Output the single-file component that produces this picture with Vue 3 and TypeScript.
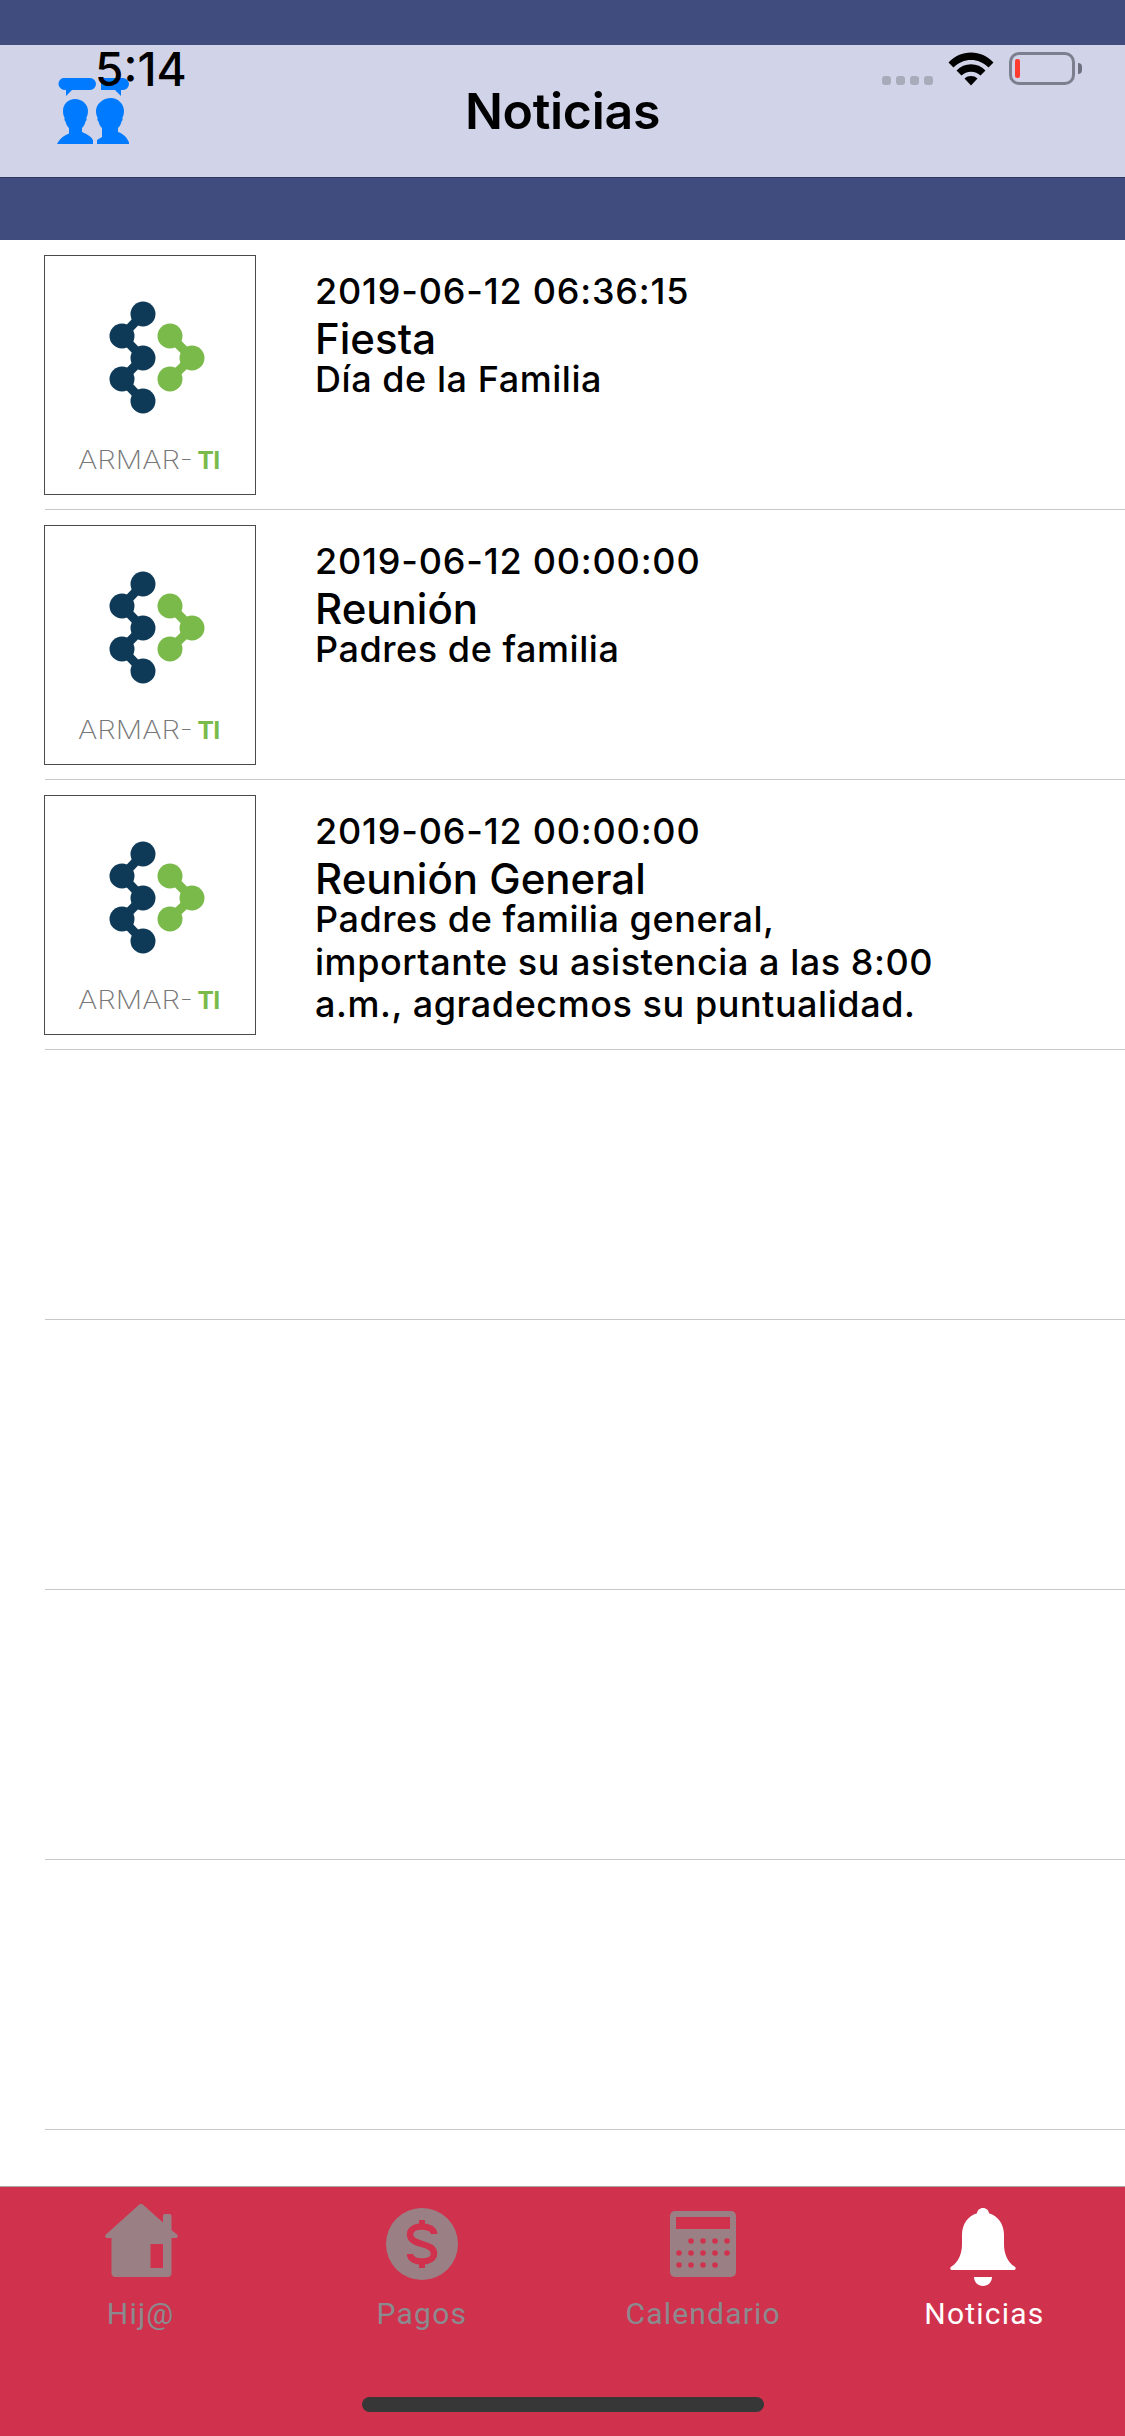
<script setup lang="ts">
interface NewsItem {
	date: string;
	title: string;
	body: string;
}

const news: NewsItem[] = [
	{ date: '2019-06-12 06:36:15', title: 'Fiesta', body: 'Día de la Familia' },
	{ date: '2019-06-12 00:00:00', title: 'Reunión', body: 'Padres de familia' },
	{
		date: '2019-06-12 00:00:00',
		title: 'Reunión General',
		body: 'Padres de familia general, importante su asistencia a las 8:00 a.m., agradecmos su puntualidad.',
	},
];

const emptyRows = 4;

const darkDots = [
	[99, 59],
	[78, 81],
	[99, 103],
	[78, 124],
	[99, 146],
];
const greenDots = [
	[126, 81],
	[148, 103],
	[126, 124],
];

const calendarDots = [
	[21, 30], [33, 30], [45, 30], [57, 30],
	[9, 42], [21, 42], [33, 42], [45, 42], [57, 42],
	[9, 54], [21, 54], [33, 54], [45, 54],
];
</script>

<template>
	<div class="screen">
		<div class="status">
			<span class="time">5:14</span>
			<div class="status-right">
				<div class="signal"><i></i><i></i><i></i><i></i></div>
				<svg class="wifi" width="46" height="34" viewBox="0 0 46 34">
					<path d="M0.5 10.5C6.5 4 14.5 0.5 23 0.5s16.500 3.500 22.500 10l-5 5C35.500 10.500 29.500 8 23 8S10.500 10.500 5.500 15.500z" fill="#000" />
					<path d="M8.500 18.500C12.500 14.500 17.500 12.300 23 12.300s10.500 2.200 14.500 6.200l-5 5C30 21 26.700 19.700 23 19.700s-7 1.300-9.500 3.800z" fill="#000" />
					<path d="M16.500 26.500C18.300 24.800 20.500 24 23 24s4.700 0.800 6.500 2.500L23 33.500z" fill="#000" />
				</svg>
				<div class="battery"><span class="battery-level"></span></div>
			</div>
		</div>

		<header class="header">
			<nav class="navbar">
				<svg class="people" width="72" height="66" viewBox="0 0 72 66">
					<path d="M6 0h27a6 6 0 0 1 0 12H15l-6 6v-6.300A6 6 0 0 1 6 0z" fill="#007aff" />
					<path d="M44 0h22a6 6 0 0 1 0 12h-2v6l-6-6H44z" fill="#007aff" />
					<path d="M18 21c7 0 13 5 13 12 0 3-.7 5-1.700 7 .6 1 .3 2.500-.8 3.500-.6 3-1.800 5-3.500 6.500v4c3 1.500 8 3 11 8v4H0c3-6 8-9 12-10.500v-5.500c-1.700-1.500-2.900-3.500-3.500-6.500-1.100-1-1.400-2.500-.8-3.500-1-2-1.700-4-1.700-7 0-7 5-12 12-12z" fill="#007aff" />
					<path d="M54 20c7 0 13 6 13 13 0 3-.7 5-1.700 7 .6 1 .3 2.500-.8 3.500-.6 3-1.800 5-3.500 6.500v4c4 1.500 8 3.500 11 10.500v1.500H40v-4l5-3v-9c-1.700-1.500-2.900-3.500-3.500-6.500-1.100-1-1.400-2.500-.8-3.500-1-2-1.700-4-1.700-7 0-7 7-13 15-13z" fill="#007aff" />
				</svg>
				<h1 class="title">Noticias</h1>
			</nav>
			<div class="subbar"></div>
		</header>

		<main class="list">
			<article v-for="(item, i) in news" :key="i" class="row">
				<div class="thumb">
					<svg width="210" height="238" viewBox="1 1 210 238">
						<path d="M99 59L78 81L99 103L78 124L99 146" fill="none" stroke="#0e3a58" stroke-width="9" />
						<path d="M126 81L148 103L126 124" fill="none" stroke="#7aba4a" stroke-width="9" />
						<circle v-for="(d, n) in darkDots" :key="n" :cx="d[0]" :cy="d[1]" r="12.500" fill="#0e3a58" />
						<circle v-for="(d, n) in greenDots" :key="n" :cx="d[0]" :cy="d[1]" r="12.500" fill="#7aba4a" />
						<text x="34" y="214" class="logo-word" textLength="115" lengthAdjust="spacingAndGlyphs">ARMAR-</text>
						<text x="154" y="214" class="logo-ti">TI</text>
					</svg>
				</div>
				<div class="copy">
					<div class="date">{{ item.date }}</div>
					<div class="name">{{ item.title }}</div>
					<p class="body">{{ item.body }}</p>
				</div>
			</article>
			<div v-for="n in emptyRows" :key="'empty' + n" class="row"></div>
		</main>

		<footer class="tabbar">
			<div class="tab">
				<svg width="90" height="90" viewBox="0 0 90 90">
					<path d="M45 4c1 0 1.500.3 2 .8L67 22.500V16c0-1.200.8-2 2-2h4.500c1.200 0 2 .8 2 2v14L81 34.500c1.500 1.500.5 3.500-1 3.500h-4.500v35c0 2.500-1.500 4-4 4h-52c-2.500 0-4-1.500-4-4V38H11c-1.500 0-2.500-2-1-3.500L43 4.800c.5-.5 1-.8 2-.8z M54.500 44v24H67V44z" fill="#9a8084" fill-rule="evenodd" />
				</svg>
				<span class="tab-label">Hij@</span>
			</div>
			<div class="tab">
				<svg width="90" height="90" viewBox="0 0 90 90">
					<circle cx="45" cy="44" r="36" fill="#9a8084" />
					<path d="M57 34C57 29.500 52 26.500 45 26.500C38 26.500 33 29.500 33 34.500C33 40 38 42 45 44C52 46 57 48 57 53.500C57 58.500 52 61.500 45 61.500C38 61.500 33 58.500 33 54" fill="none" stroke="#d0324e" stroke-width="6.500" />
					<rect x="42" y="20" width="6" height="8" fill="#d0324e" />
					<rect x="42" y="60" width="6" height="8" fill="#d0324e" />
				</svg>
				<span class="tab-label">Pagos</span>
			</div>
			<div class="tab">
				<svg width="90" height="90" viewBox="-12 -11 90 90">
					<rect width="66" height="66" rx="5" fill="#9a8084" />
					<rect x="6" y="6" width="54" height="12" fill="#d0324e" />
					<circle v-for="(d, n) in calendarDots" :key="n" :cx="d[0]" :cy="d[1]" r="2.800" fill="#d0324e" />
				</svg>
				<span class="tab-label">Calendario</span>
			</div>
			<div class="tab is-active">
				<svg width="90" height="90" viewBox="0 0 90 90">
					<path d="M44 8c3.300 0 5.800 2.300 6 5.200C59 16 65 24 65 35v9c0 10 3.500 18 10.500 22.500 2 1.300 1.500 3.500-1 3.500h-61c-2.500 0-3-2.200-1-3.500C19.500 62 23 54 23 44v-9C23 24 29 16 38 13.200 38.200 10.300 40.700 8 44 8z" fill="#fff" />
					<path d="M35 77h18c0 5-4 9-9 9s-9-4-9-9z" fill="#fff" />
				</svg>
				<span class="tab-label">Noticias</span>
			</div>
			<div class="home-bar"></div>
		</footer>
	</div>
</template>

<style>
html,
body {
	margin: 0;
	background: #fff;
}
</style>

<style scoped>
.screen {
	position: relative;
	width: 1125px;
	height: 2436px;
	display: flex;
	flex-direction: column;
	overflow: hidden;
	background: #fff;
	color: #000;
	font-family: Inter, "Liberation Sans", sans-serif;
}

/* status bar sits on top of the header */
.status {
	position: absolute;
	top: 0;
	left: 0;
	right: 0;
	height: 100px;
	z-index: 2;
	pointer-events: none;
}

.time {
	position: absolute;
	left: 95px;
	top: 44px;
	font-size: 46px;
	line-height: 50px;
	font-weight: 500;
}

.status-right {
	position: absolute;
	top: 52px;
	left: 882px;
	display: flex;
	align-items: flex-start;
}

.signal {
	display: flex;
	gap: 5px;
	margin-top: 24px;
	margin-right: 15px;
}

.signal i {
	width: 9px;
	height: 9px;
	border-radius: 3px;
	background: #a8abba;
}

.wifi {
	margin-right: 15px;
}

.battery {
	position: relative;
	box-sizing: border-box;
	width: 66px;
	height: 33px;
	border: 3px solid #7d7f8e;
	border-radius: 10px;
}

.battery::after {
	content: '';
	position: absolute;
	right: -10px;
	top: 8px;
	width: 4px;
	height: 11px;
	border-radius: 0 6px 6px 0;
	background: #6f7180;
}

.battery-level {
	position: absolute;
	left: 3px;
	top: 4px;
	width: 5px;
	height: 19px;
	border-radius: 2px;
	background: #ff3b30;
}

.header {
	flex: none;
	padding-top: 45px;
	background: #404c7e;
}

.navbar {
	position: relative;
	box-sizing: border-box;
	height: 133px;
	display: flex;
	align-items: center;
	justify-content: center;
	background: #d1d4e8;
	border-bottom: 1px solid #2f3860;
}

.people {
	position: absolute;
	left: 57px;
	top: 33px;
}

.title {
	margin: 0;
	font-size: 50px;
	line-height: 60px;
	font-weight: 600;
	letter-spacing: -0.3px;
}

.subbar {
	height: 62px;
}

.list {
	flex: 1;
	padding-left: 45px;
}

.row {
	box-sizing: border-box;
	height: 270px;
	padding-top: 15px;
	display: flex;
	border-bottom: 1px solid #c8c8c8;
}

.thumb {
	box-sizing: border-box;
	flex: none;
	width: 212px;
	height: 240px;
	margin-left: -1px;
	border: 1px solid #4a4a4a;
}

.thumb svg {
	display: block;
}

.logo-word {
	font-family: Inter, "Liberation Sans", sans-serif;
	font-size: 25px;
	font-weight: 200;
	fill: #777;
}

.logo-ti {
	font-family: "Liberation Sans", sans-serif;
	font-size: 25px;
	font-weight: 700;
	fill: #7aba4a;
}

.copy {
	width: 630px;
	margin-left: 59px;
	padding-top: 15px;
}

.date {
	font-size: 36px;
	line-height: 42px;
	font-weight: 500;
	letter-spacing: 0.8px;
}

.name {
	padding-top: 8px;
	font-size: 42px;
	line-height: 38px;
	font-weight: 500;
}

.body {
	margin: 0;
	font-size: 36px;
	line-height: 42.5px;
	font-weight: 500;
	letter-spacing: 0.55px;
}

.tabbar {
	position: relative;
	box-sizing: border-box;
	flex: none;
	height: 250px;
	padding-top: 13px;
	display: grid;
	grid-template-columns: repeat(4, 1fr);
	align-items: start;
	background: #d0324e;
	border-top: 1px solid #a9a9a9;
}

.tab {
	display: flex;
	flex-direction: column;
	align-items: center;
	color: #8b8a8e;
}

.tab svg {
	display: block;
}

.tab-label {
	margin-top: 6px;
	font-family: Roboto, "Liberation Sans", sans-serif;
	font-size: 30px;
	line-height: 36px;
	letter-spacing: 1.2px;
}

.is-active {
	color: #fff;
}

.home-bar {
	position: absolute;
	left: 362px;
	bottom: 24px;
	width: 402px;
	height: 15px;
	border-radius: 8px;
	background: #373737;
}
</style>
